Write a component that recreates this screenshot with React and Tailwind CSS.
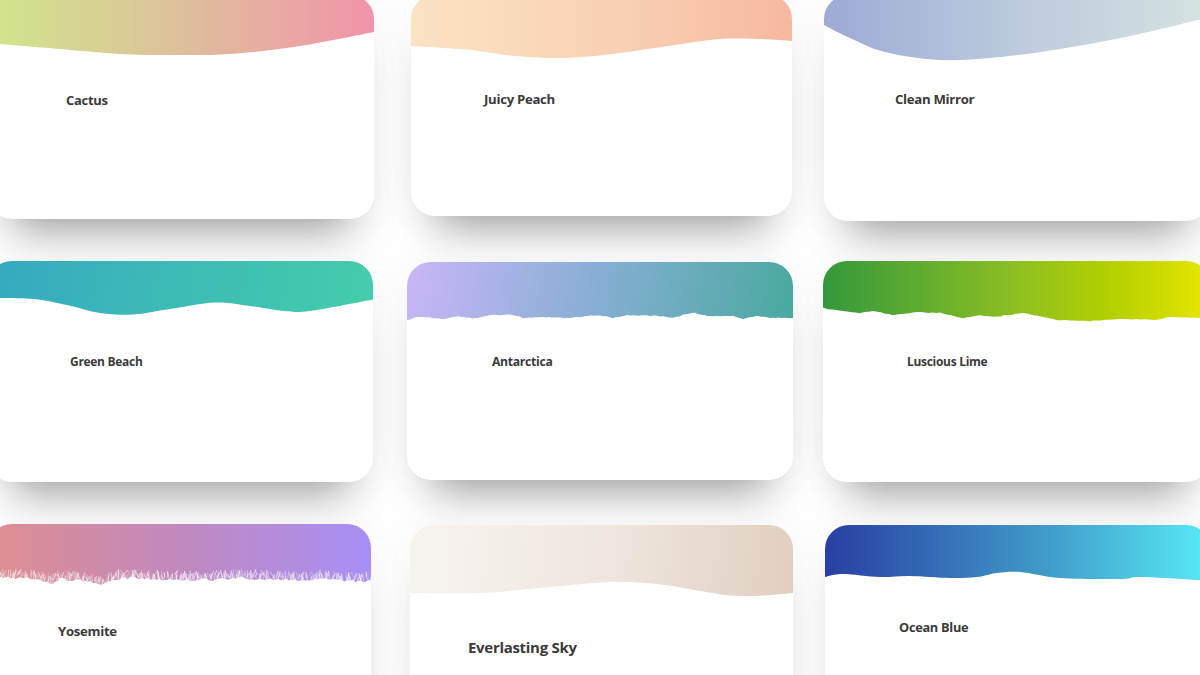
// Gradient cards, wave edges are in page coordinates and mapped through each svg viewBox

// catmull-rom through the points, for the soft waves
function smooth(pts) {
  let d = `M${pts[0][0]} ${pts[0][1]}`;
  for (let i = 0; i < pts.length - 1; i++) {
    const p0 = pts[i - 1] ?? pts[i];
    const p1 = pts[i];
    const p2 = pts[i + 1];
    const p3 = pts[i + 2] ?? p2;
    const c1x = p1[0] + (p2[0] - p0[0]) / 6;
    const c1y = p1[1] + (p2[1] - p0[1]) / 6;
    const c2x = p2[0] - (p3[0] - p1[0]) / 6;
    const c2y = p2[1] - (p3[1] - p1[1]) / 6;
    d += ` C${c1x.toFixed(1)} ${c1y.toFixed(1)} ${c2x.toFixed(1)} ${c2y.toFixed(1)} ${p2[0]} ${p2[1]}`;
  }
  return d;
}

// fixed pseudo noise so the torn edges stay the same on every render
const noise = (n) => {
  const v = Math.sin(n * 127.1) * 43758.5453;
  return v - Math.floor(v);
};

const lerpY = (pts, x) => {
  for (let i = 0; i < pts.length - 1; i++) {
    if (x <= pts[i + 1][0]) {
      const t = (x - pts[i][0]) / (pts[i + 1][0] - pts[i][0]);
      return pts[i][1] + (pts[i + 1][1] - pts[i][1]) * t;
    }
  }
  return pts[pts.length - 1][1];
};

// straight segments with small jitter, for the torn edges
function torn(pts, step, amp, seed) {
  let d = '';
  let n = seed;
  for (let i = 0; i < pts.length - 1; i++) {
    const [x1, y1] = pts[i];
    const [x2, y2] = pts[i + 1];
    const count = Math.max(1, Math.round((x2 - x1) / step));
    for (let k = 0; k < count; k++) {
      const t = k / count;
      const jitter = (noise(n++) - 0.5) * amp;
      const x = x1 + (x2 - x1) * t;
      const y = y1 + (y2 - y1) * t + jitter;
      d += `${d ? ' L' : 'M'}${x.toFixed(1)} ${y.toFixed(1)}`;
    }
  }
  const last = pts[pts.length - 1];
  return `${d} L${last[0]} ${last[1]}`;
}

function closeShape(edge, left, right, bottom) {
  return `${edge} L${right} ${bottom} L${left} ${bottom} Z`;
}

// top of the feathery fringe on the Yosemite card
const yosemiteTop = [[-12, 568], [30, 569], [45, 572], [52, 574], [60, 570], [78, 571], [95, 574], [105, 575], [112, 570], [125, 569], [150, 570], [190, 571], [205, 571], [240, 569], [280, 571], [305, 572], [320, 569], [345, 572], [371, 572]];

function yosemiteHairs() {
  const hairs = [];
  for (let i = 0; i < 420; i++) {
    const x = -12 + i * 0.92 + noise(i + 7) * 1.5;
    const top = lerpY(yosemiteTop, x) + noise(i + 300) * 6;
    const end = top + 3 + noise(i + 600) * 9;
    const lean = (noise(i + 1200) - 0.5) * 7;
    hairs.push({ x, top, end, lean, opacity: 0.12 + noise(i + 900) * 0.5 });
  }
  return hairs;
}

const CARDS = [
  {
    title: 'Cactus',
    place: 'ml-[-12px] mt-[-5px] w-[386px] h-[224px]',
    gradient: 'bg-[linear-gradient(90deg,#d0e68a,#dcc49a_45%,#f293a9)]',
    headerH: 'h-[70px]',
    box: [-12, -5, 386, 70],
    edge: smooth([[-12, 43], [60, 49], [120, 54], [170, 55], [230, 54], [300, 46], [374, 32]]),
    body: 'pl-[78px] pt-[25px] text-[13px]',
  },
  {
    title: 'Juicy Peach',
    place: 'ml-[11px] mt-[-5px] w-[381px] h-[221px]',
    gradient: 'bg-[linear-gradient(90deg,#fbe3c4,#f9d0b4_55%,#f6b89f)]',
    headerH: 'h-[70px]',
    box: [411, -5, 381, 70],
    edge: smooth([[411, 46], [470, 50], [515, 56], [565, 58], [620, 53], [675, 45], [720, 39], [760, 39], [792, 41]]),
    body: 'pl-[73px] pt-[24px] text-[13.2px]',
  },
  {
    title: 'Clean Mirror',
    place: 'ml-[8px] mt-[-5px] w-[386px] h-[226px]',
    gradient: 'bg-[linear-gradient(90deg,#9dabd6,#bccadd_50%,#d5e3e1)]',
    headerH: 'h-[70px]',
    box: [824, -5, 386, 70],
    edge: smooth([[824, 25], [850, 38], [885, 52], [940, 60], [1000, 57], [1060, 49], [1130, 36], [1210, 17]]),
    body: 'pl-[71px] pt-[24px] text-[13.2px]',
  },
  {
    title: 'Green Beach',
    place: 'ml-[-12px] mt-[1px] w-[385px] h-[221px]',
    gradient: 'bg-[linear-gradient(100deg,#35a9c0,#3dbcb5_50%,#44cdab)]',
    headerH: 'h-[70px]',
    box: [-12, 261, 385, 70],
    edge: smooth([[-12, 298], [33, 299], [67, 305], [100, 313], [133, 314.5], [170, 309], [215, 302.5], [250, 306], [285, 311], [310, 311], [373, 299.5]]),
    body: 'pl-[82px] pt-[21px] text-[12px]',
  },
  {
    title: 'Antarctica',
    place: 'ml-[7px] mt-[2px] w-[386px] h-[218px]',
    gradient: 'bg-[linear-gradient(100deg,#c9b6f6,#85aed2_50%,#48a99e)]',
    headerH: 'h-[70px]',
    box: [407, 262, 386, 70],
    edge: torn([[407, 320], [417, 317], [433, 318], [443, 319], [458, 316], [467, 318], [478, 318], [490, 315], [513, 315], [523, 318], [540, 317], [567, 318], [597, 315], [613, 318], [627, 315], [660, 316], [673, 318], [683, 315], [695, 313], [707, 316], [733, 316], [743, 319], [755, 316], [770, 318], [793, 318]], 3, 1, 3),
    body: 'pl-[85px] pt-[20px] text-[12.2px]',
  },
  {
    title: 'Luscious Lime',
    place: 'ml-[7px] mt-[1px] w-[387px] h-[221px]',
    gradient: 'bg-[linear-gradient(90deg,#33993b,#8dbf22_50%,#b5d000_75%,#e6e600)]',
    headerH: 'h-[70px]',
    box: [823, 261, 387, 70],
    edge: torn([[823, 308], [843, 311], [860, 313], [873, 311], [893, 315], [917, 312], [940, 313], [963, 318], [980, 315], [993, 317], [1023, 313], [1057, 320], [1090, 321], [1120, 319], [1157, 320], [1170, 317], [1210, 318]], 4, 0.8, 40),
    body: 'pl-[84px] pt-[21px] text-[12px]',
  },
  {
    title: 'Yosemite',
    place: 'ml-[-12px] mt-[1px] w-[383px] h-[190px]',
    gradient: 'bg-[linear-gradient(90deg,#e08e90,#c088bd_50%,#a78ff6)]',
    headerH: 'h-[70px]',
    box: [-12, 524, 383, 70],
    hairs: yosemiteHairs(),
    edge: torn(yosemiteTop.map(([x, y]) => [x, y + 9]), 2.5, 3, 400),
    body: 'pl-[70px] pt-[27px] text-[13.2px]',
  },
  {
    title: 'Everlasting Sky',
    place: 'ml-[10px] mt-[2px] w-[383px] h-[190px]',
    gradient: 'bg-[linear-gradient(95deg,#f7f4f0,#efe7df_50%,#e0cfc0)]',
    headerH: 'h-[75px]',
    box: [410, 525, 383, 75],
    edge: smooth([[410, 593], [480, 593], [540, 588], [600, 582.5], [630, 582], [665, 585], [700, 591], [730, 595.5], [760, 595.8], [793, 593]]),
    body: 'pl-[58px] pt-[37px] text-[15px]',
  },
  {
    title: 'Ocean Blue',
    place: 'ml-[9px] mt-[2px] w-[385px] h-[190px]',
    gradient: 'bg-[linear-gradient(90deg,#2a3fa3,#3f97c7_55%,#57eaf6)]',
    headerH: 'h-[70px]',
    box: [825, 525, 385, 70],
    edge: smooth([[825, 577], [843, 574], [880, 577], [910, 576], [950, 578], [977, 577], [997, 573], [1020, 572], [1060, 578], [1120, 579], [1143, 577], [1210, 581]]),
    body: 'pl-[74px] pt-[22px] text-[12.8px]',
  },
];

function Card({ card }) {
  const [x, y, w, h] = card.box;
  const right = x + w;
  const bottom = y + h;
  return (
    <div className={`${card.place} rounded-[24px] bg-white shadow-[0_0_50px_rgba(0,0,0,0.035),0_35px_40px_-25px_rgba(0,0,0,0.38)] overflow-hidden`}>
      <div className={`relative ${card.headerH} ${card.gradient}`}>
        <svg className="absolute inset-0 w-full h-full" viewBox={`${x} ${y} ${w} ${h}`}>
          {card.hairs && (
            <g stroke="#fff" strokeWidth="1.1" strokeLinecap="round">
              {card.hairs.map((hair, i) => (
                <line key={i} x1={hair.x + hair.lean} y1={hair.top} x2={hair.x} y2={hair.end} strokeOpacity={hair.opacity} />
              ))}
            </g>
          )}
          <path d={closeShape(card.edge, x, right, bottom)} fill="#fff" />
        </svg>
      </div>
      <p className={`${card.body} font-bold tracking-[-0.3px] text-[#3a3a3a] leading-5`}>{card.title}</p>
    </div>
  );
}

export default function App() {
  return (
    <div className="w-[1200px] h-[675px] overflow-hidden bg-[#fefefe] font-['Open_Sans',sans-serif]">
      <div className="grid grid-cols-[400px_416px_384px] grid-rows-[260px_263px_152px]">
        {CARDS.map((card) => (
          <Card key={card.title} card={card} />
        ))}
      </div>
    </div>
  );
}
